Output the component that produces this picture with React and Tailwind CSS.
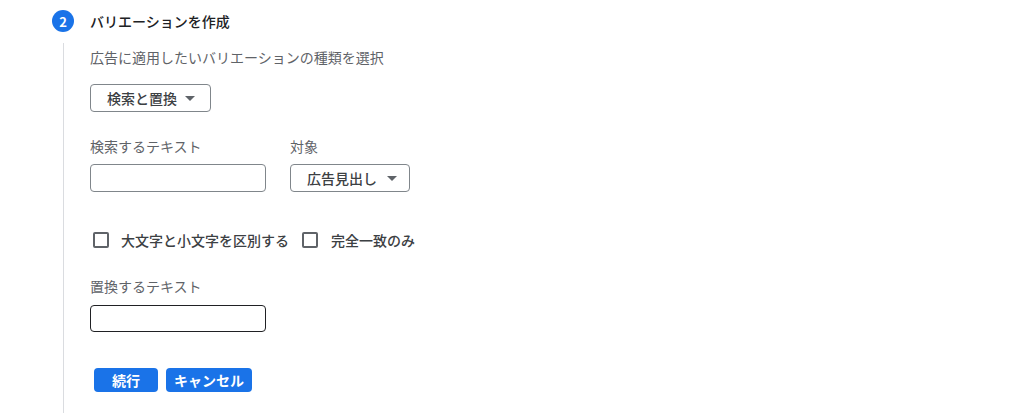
export default function App() {
  const font = { fontFamily: '"Noto Sans CJK JP", "Noto Sans", Roboto, sans-serif' };
  const Caret = () => (
    <svg width="10" height="5" viewBox="0 0 10 5" className="shrink-0">
      <path d="M0 0 L10 0 L5 5 Z" fill="#5f6368" />
    </svg>
  );
  return (
    <div className="w-[1017px] h-[413px] bg-white overflow-hidden pl-[52px] pt-[10px]" style={font}>
      <div className="flex items-center h-[22px]">
        <div className="w-[22px] h-[22px] rounded-full bg-[#1a73e8] flex items-center justify-center text-white text-[13px] font-bold leading-none">
          2
        </div>
        <div className="ml-[16px] text-[14px] leading-[20px] font-medium text-[#202124]">バリエーションを作成</div>
      </div>
      <div className="ml-[11px] mt-[11px] border-l border-[#dadce0] pl-[26px] h-[400px]">
        <div className="pt-[4px] text-[14px] leading-[20px] text-[#5f6368]">広告に適用したいバリエーションの種類を選択</div>
        <div className="mt-[17px] flex">
          <button className="h-[28px] w-[121px] border border-[#80868b] rounded-[4px] flex items-center pl-[16px] pr-[15px] gap-[8px] text-[14px] font-medium text-[#3c4043]">
            <span className="leading-none">検索と置換</span>
            <Caret />
          </button>
        </div>
        <div className="mt-[24px] flex">
          <div className="flex flex-col w-[200px]">
            <div className="text-[14px] leading-[20px] text-[#5f6368]">検索するテキスト</div>
            <div className="mt-[8px] w-[176px] h-[28px] border border-[#80868b] rounded-[4px]"></div>
          </div>
          <div className="flex flex-col">
            <div className="text-[14px] leading-[20px] text-[#5f6368]">対象</div>
            <button className="mt-[8px] h-[28px] w-[120px] border border-[#80868b] rounded-[4px] flex items-center pl-[16px] gap-[10px] text-[14px] font-medium text-[#3c4043]">
              <span className="leading-none">広告見出し</span>
              <Caret />
            </button>
          </div>
        </div>
        <div className="mt-[36px] flex items-center h-[24px] text-[14px] font-medium text-[#3c4043]">
          <div className="ml-[3px] w-[16px] h-[16px] border-2 border-[#5f6368] rounded-[2px]"></div>
          <span className="ml-[12px]">大文字と小文字を区別する</span>
          <div className="ml-[13px] w-[16px] h-[16px] border-2 border-[#5f6368] rounded-[2px]"></div>
          <span className="ml-[13px]">完全一致のみ</span>
        </div>
        <div className="mt-[24px] text-[14px] leading-[20px] text-[#5f6368]">置換するテキスト</div>
        <div className="mt-[9px] w-[176px] h-[27px] border border-[#202124] rounded-[4px]"></div>
        <div className="mt-[36px] ml-[4px] flex gap-[8px]">
          <button className="h-[24px] min-w-[64px] px-[8px] rounded-[4px] bg-[#1a73e8] text-white text-[14px] font-bold leading-none">続行</button>
          <button className="h-[24px] min-w-[64px] px-[8px] rounded-[4px] bg-[#1a73e8] text-white text-[14px] font-bold leading-none">キャンセル</button>
        </div>
      </div>
    </div>
  );
}
